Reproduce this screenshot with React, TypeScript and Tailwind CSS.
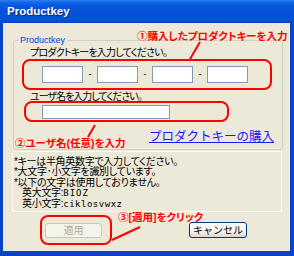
import React from 'react';

const palt = "[font-feature-settings:'palt']";

function KeyBox() {
  return <div className="w-[41px] h-[17px] border border-[#7f9db9] bg-white" />;
}

function Dash() {
  return <div className="w-[14px] text-center text-[9px] leading-[17px] text-black">-</div>;
}

export default function App() {
  return (
    <div className="relative w-[294px] h-[256px] bg-[#0845c6] flex flex-col font-['Liberation_Sans','Noto_Sans_CJK_JP',sans-serif] overflow-hidden">
      {/* title bar */}
      <div className="h-[23px] shrink-0 flex items-center pl-[7px] bg-[linear-gradient(to_bottom,#2f82f2_0%,#0f62e6_12%,#0656dc_30%,#0450d6_60%,#0553dc_85%,#0643c0_100%)]">
        <span className="text-white font-bold text-[11.5px] [text-shadow:1px_1px_0_#0a2a8a]">Productkey</span>
      </div>

      {/* body */}
      <div className="flex-1 ml-[3px] mr-[4px] mb-[5px] bg-[#ece9d8] flex flex-col">
        <fieldset className="ml-[10px] mt-[11px] w-[270px] border border-[#d0d0bf] rounded-[3px] pb-[4px]">
          <legend className="ml-[4px] px-[2px] text-[9px] leading-[12px] text-[#0046d5]">Productkey</legend>
          <div className={`ml-[16px] mt-[1px] text-[10px] leading-[12px] tracking-[-0.8px] text-black ${palt}`}>
            プロダクトキーを入力してください。
          </div>
          <div className="ml-[8px] w-[250px] h-[31px] border-2 border-[#ff0000] rounded-[8px] flex items-center pl-[18px]">
            <KeyBox />
            <Dash />
            <KeyBox />
            <Dash />
            <KeyBox />
            <Dash />
            <KeyBox />
          </div>
          <div className={`ml-[16px] mt-[1px] text-[10px] leading-[12px] tracking-[-1px] text-black ${palt}`}>
            ユーザ名を入力してください。
          </div>
          <div className="ml-[10px] -mt-[2px] w-[205px] h-[21px] border-2 border-[#ff0000] rounded-[8px] flex items-center pl-[16px]">
            <div className="w-[128px] h-[14px] border border-[#7f9db9] bg-white" />
          </div>
          <div className="ml-[135px] mt-[7px] text-[12.5px] leading-[16px] text-[#1a1aff] underline">
            プロダクトキーの購入
          </div>
        </fieldset>

        <div className={`ml-[9px] mt-[1px] w-[270px] h-[61px] border border-[#fbfaf6] pl-[1px] pt-[5px] text-[10px] leading-[10.4px] tracking-[-0.3px] text-black ${palt}`}>
          <div>*キーは半角英数字で入力してください。</div>
          <div>*大文字･小文字を識別しています。</div>
          <div>*以下の文字は使用しておりません。</div>
          <div className="pl-[8px]">
            英大文字:<span className="font-['DejaVu_Sans_Mono',monospace] text-[9px] tracking-[1px]">BIOZ</span>
          </div>
          <div className="pl-[8px]">
            英小文字:<span className="font-['DejaVu_Sans_Mono',monospace] text-[9px] tracking-[0.5px]">ciklosvwxz</span>
          </div>
        </div>

        <div className="flex items-center mt-[3px]">
          <div className="ml-[37px] w-[72px] h-[30px] border-2 border-[#ff0000] rounded-[8px] flex items-center pl-[3px]">
            <div className="w-[57px] h-[15px] border border-[#c9c7ba] rounded-[3px] bg-[#f5f4ea] flex items-center justify-center text-[10px] text-[#aca899]">
              適用
            </div>
          </div>
          <div className="ml-[77px] w-[58px] h-[16px] border border-[#003c74] rounded-[3px] bg-[linear-gradient(to_bottom,#ffffff,#f4f4f0_60%,#dcd8cc)] flex items-center justify-center text-[10px] text-black">
            キャンセル
          </div>
        </div>
      </div>

      {/* callout overlays */}
      <svg className="absolute left-0 top-0 pointer-events-none" width="294" height="256">
        <line x1="200" y1="42" x2="190" y2="59" stroke="#ff0000" strokeWidth="2" />
        <line x1="95" y1="125" x2="88" y2="137" stroke="#ff0000" strokeWidth="2" />
        <line x1="112" y1="240" x2="140" y2="227" stroke="#ff0000" strokeWidth="2" />
      </svg>
      <div className={`absolute left-[137px] top-[30px] text-[10.5px] leading-[12px] font-bold text-[#ff0000] whitespace-nowrap ${palt}`}>
        ①購入したプロダクトキーを入力
      </div>
      <div className={`absolute left-[15px] top-[137px] text-[10.5px] leading-[12px] font-bold text-[#ff0000] whitespace-nowrap ${palt}`}>
        ②ユーザ名(任意)を入力
      </div>
      <div className={`absolute left-[118px] top-[211px] text-[10.5px] leading-[12px] font-bold text-[#ff0000] whitespace-nowrap ${palt}`}>
        ③[適用]をクリック
      </div>
    </div>
  );
}
